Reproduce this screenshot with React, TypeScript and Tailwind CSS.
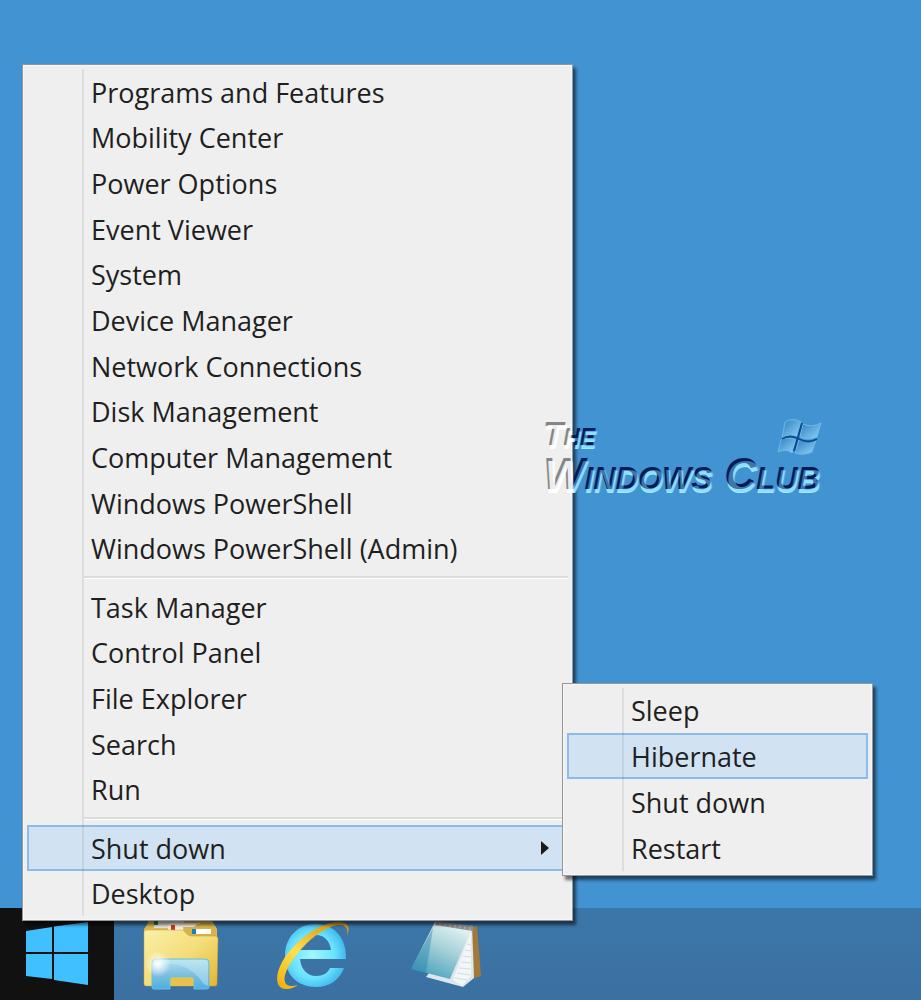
import { ReactNode } from "react";
import clsx from "clsx";

type MenuEntry = {
  label: string;
  active?: boolean;
  submenu?: MenuEntry[];
};

const powerEntries: MenuEntry[] = [
  { label: "Sleep" },
  { label: "Hibernate", active: true },
  { label: "Shut down" },
  { label: "Restart" },
];

const systemEntries: MenuEntry[] = [
  { label: "Programs and Features" },
  { label: "Mobility Center" },
  { label: "Power Options" },
  { label: "Event Viewer" },
  { label: "System" },
  { label: "Device Manager" },
  { label: "Network Connections" },
  { label: "Disk Management" },
  { label: "Computer Management" },
  { label: "Windows PowerShell" },
  { label: "Windows PowerShell (Admin)" },
];

const toolEntries: MenuEntry[] = [
  { label: "Task Manager" },
  { label: "Control Panel" },
  { label: "File Explorer" },
  { label: "Search" },
  { label: "Run" },
];

const sessionEntries: MenuEntry[] = [
  { label: "Shut down", active: true, submenu: powerEntries },
  { label: "Desktop" },
];

function MenuPanel({
  label,
  className,
  children,
}: {
  label: string;
  className: string;
  children: ReactNode;
}) {
  return (
    <div
      role="menu"
      aria-label={label}
      className={clsx(
        "absolute border border-[#979797] bg-[#efefef] p-1 shadow-[3px_4px_3px_rgba(0,0,0,0.55),inset_0_0_0_1px_#f6f6f6]",
        className
      )}
    >
      {children}
      {/* gutter line, runs through the highlighted rows as well */}
      <span className="pointer-events-none absolute inset-y-1 left-[59px] w-[2px] bg-black/7" />
    </div>
  );
}

function MenuGroup({
  entries,
  className,
}: {
  entries: MenuEntry[];
  className: string;
}) {
  return (
    <ul role="none" className={clsx("grid auto-rows-fr", className)}>
      {entries.map((entry) => (
        <li key={entry.label} role="none" className="relative flex">
          <button
            type="button"
            role="menuitem"
            aria-haspopup={entry.submenu ? "menu" : undefined}
            className={clsx(
              "flex w-full items-center justify-between border-2 pt-[2px] pr-4 pl-[62px] text-left leading-8",
              entry.active
                ? "border-[#8dbcec] bg-[#d1e2f2]"
                : "border-transparent"
            )}
          >
            {entry.label}
            {entry.submenu && (
              <svg width="10" height="16" viewBox="0 0 10 16" aria-hidden="true">
                <path d="M1 0v14l8-7z" fill="#1a1a1a" />
              </svg>
            )}
          </button>
          {entry.submenu && (
            <MenuPanel
              label={entry.label}
              className="-bottom-[5px] left-full z-10 -ml-[6px] w-[311px]"
            >
              <MenuGroup entries={entry.submenu} className="h-[183px]" />
            </MenuPanel>
          )}
        </li>
      ))}
    </ul>
  );
}

function MenuSeparator() {
  return (
    <div role="separator" className="flex h-[13px] items-center pl-[57px]">
      <span className="h-[3px] w-full border-b border-white bg-[#dcdcdc]" />
    </div>
  );
}

function ClubLogo() {
  return (
    <svg
      width="290"
      height="86"
      viewBox="0 0 290 86"
      className="pointer-events-none absolute top-[414px] left-[540px] z-20"
      role="img"
      aria-label="The Windows Club"
    >
      <defs>
        <linearGradient id="dark" gradientUnits="userSpaceOnUse" x1="0" x2="290" y1="0" y2="0">
          <stop offset="0.105" stopColor="#858585" />
          <stop offset="0.115" stopColor="#001a56" />
        </linearGradient>
        <linearGradient id="light" gradientUnits="userSpaceOnUse" x1="0" x2="290" y1="0" y2="0">
          <stop offset="0.105" stopColor="#ffffff" />
          <stop offset="0.115" stopColor="#a0ecff" />
        </linearGradient>
        <linearGradient id="face" gradientUnits="userSpaceOnUse" x1="0" x2="290" y1="0" y2="0">
          <stop offset="0.105" stopColor="#ffffff" stopOpacity="0.85" />
          <stop offset="0.115" stopColor="#7fd0fa" stopOpacity="0.5" />
        </linearGradient>
        <linearGradient id="pane" x1="0" x2="1" y1="0" y2="1">
          <stop offset="0" stopColor="#2f7fbf" />
          <stop offset="1" stopColor="#8fd4fb" />
        </linearGradient>
        <g
          id="wordmark"
          fontFamily='"Liberation Sans", Arial, sans-serif'
          fontWeight="700"
          fontStyle="italic"
          style={{ fontVariant: "small-caps" }}
        >
          <text x="3" y="31" fontSize="33">
            The
          </text>
          <text x="3" y="75" fontSize="44">
            Windows Club
          </text>
        </g>
      </defs>
      <use href="#wordmark" x="1" y="4" fill="url(#light)" />
      <use href="#wordmark" fill="url(#dark)" />
      <use href="#wordmark" x="2" y="3" fill="url(#face)" />
      <g stroke="#6db8ea" strokeWidth="1">
        <path d="M245 8q8-5 16 0l-4 15q-8-4-15 1z" fill="url(#pane)" />
        <path d="M263 10q8 4 18-1l-4 14q-9 4-17 0z" fill="url(#pane)" />
        <path d="M241 26q8-4 15 0l-4 13q-6-5-14-1z" fill="url(#pane)" />
        <path d="M259 26q8 4 17 0l-4 12q-9 4-17 1z" fill="url(#pane)" />
      </g>
      <path d="M262 9l-8 28M242 25q8-5 17 0t18 0" fill="none" stroke="#0d4b8c" strokeWidth="2" />
    </svg>
  );
}

function WindowsIcon() {
  return (
    <svg width="64" height="64" viewBox="0 0 64 64" aria-hidden="true">
      <g fill="#40c0ff">
        <path d="M1 9l26-4v25H1z" />
        <path d="M29 4.500L63 0v30H29z" />
        <path d="M1 32h26v25L1 54z" />
        <path d="M29 32h34v31l-34-5z" />
      </g>
    </svg>
  );
}

function FolderIcon() {
  return (
    <svg width="76" height="76" viewBox="0 0 76 76" aria-hidden="true">
      <defs>
        <linearGradient id="folder" x1="0" x2="1" y1="0" y2="1">
          <stop offset="0" stopColor="#faf0a8" />
          <stop offset="0.5" stopColor="#f4dd7b" />
          <stop offset="1" stopColor="#e3b52d" />
        </linearGradient>
        <linearGradient id="stand" x1="0" x2="0" y1="0" y2="1">
          <stop offset="0" stopColor="#b4e3f2" />
          <stop offset="0.5" stopColor="#7fc0dc" />
          <stop offset="1" stopColor="#4bb0e4" />
        </linearGradient>
        <radialGradient id="shine">
          <stop offset="0" stopColor="#ffffff" />
          <stop offset="1" stopColor="#ffffff" stopOpacity="0" />
        </radialGradient>
      </defs>
      <path d="M4 9l2-6h62l6 10v15H1V13z" fill="#dbb955" />
      <path d="M11 3h30v9H11z" fill="#e9e5da" />
      <path d="M11 5h4v4h-4z" fill="#22823b" />
      <path d="M25 7h32v10H25z" fill="#f4eee2" />
      <path d="M28 9h4v5h-4z" fill="#d6331c" />
      <path d="M40 11h11l3-3h14l5 6v9H41z" fill="#d9b24a" />
      <path
        d="M1 16q0-2 3-2h34q3 0 5 3 2 3 5 3h24q3 0 3 3l-1 45q0 2-2 2H3q-2 0-2-2z"
        fill="url(#folder)"
        stroke="#cf9f2b"
        strokeWidth="0.500"
      />
      <path d="M49 13h19v5H49z" fill="#fff" />
      <path d="M49 13h4v5h-4z" fill="#157fc3" />
      <path
        d="M12 43h50q4 0 4 4v24q0 2-2 2H51V63q0-2-2-2H29q-2 0-2 2v10H11q-2 0-2-2V47q0-4 3-4z"
        fill="url(#stand)"
        stroke="#6fbbdb"
      />
      <path d="M28 62h21v8H28z" fill="#e8c14a" />
      <path d="M10 50q32-9 51 18l4 2V48q0-4-4-4H13q-3 0-3 5z" fill="#c8edf7" opacity="0.45" />
      <circle cx="15" cy="48" r="13" fill="url(#shine)" />
    </svg>
  );
}

function ExplorerIcon() {
  return (
    <svg width="76" height="76" viewBox="0 0 76 76" aria-hidden="true">
      <defs>
        <radialGradient id="blueE" cx="0.45" cy="0.5" r="0.6">
          <stop offset="0" stopColor="#a4f7ff" />
          <stop offset="0.6" stopColor="#6be2fd" />
          <stop offset="1" stopColor="#35aeea" />
        </radialGradient>
        <linearGradient id="ring" x1="0.7" x2="0" y1="0" y2="1">
          <stop offset="0" stopColor="#d99c13" />
          <stop offset="0.5" stopColor="#ffe14c" />
          <stop offset="1" stopColor="#f0ad0a" />
        </linearGradient>
      </defs>
      <path
        d="M70 43H24c1 10 7 17 16 17 7 0 12-3 14-8h14c-4 12-15 19-28 19C22 71 9 59 9 40S22 8 40 8c18 0 31 14 30 35zM24 34h31c-1-9-7-15-15-15-9 0-15 6-16 15z"
        fill="url(#blueE)"
        fillRule="evenodd"
      />
      <path
        d="M71 20c4-10 0-14-9-14C43 6 18 26 6 46-2 61 0 74 11 73c4 0 8-2 11-4-7 2-12 1-13-3-3-8 8-25 21-38C43 15 57 8 65 9c6 1 7 4 6 11z"
        fill="url(#ring)"
      />
    </svg>
  );
}

function NotepadIcon() {
  return (
    <svg width="74" height="76" viewBox="0 0 74 76" aria-hidden="true">
      <defs>
        <linearGradient id="cover" x1="0.7" x2="0.2" y1="0" y2="1">
          <stop offset="0" stopColor="#e6f3f3" />
          <stop offset="0.45" stopColor="#a4d0d8" />
          <stop offset="1" stopColor="#3e9dba" />
        </linearGradient>
      </defs>
      <path d="M62 11l5-1 4 50-12 4z" fill="#a3793a" />
      <path d="M62 9l2 53-11 9-37-10 6-8z" fill="#dde7eb" />
      <path d="M61 15v45l-9 10-9-6z" fill="#f2f6f8" />
      <path
        d="M57 28l4 1m-6 5l6 1m-8 5l8 1m-10 5l10 1m-12 5l12 1m-14 4l13 2m-15 3l12 2"
        stroke="#d3dde2"
      />
      <path d="M25 6l36 8-21 49L1 53z" fill="url(#cover)" />
      <path d="M23 12l-7 45-15-4z" fill="#1e7eab" opacity="0.4" />
      <path d="M26 5l38 5-1 5-38-6z" fill="#8b8d91" />
      <path d="M30 7v3m5-2v3m5-3v3m5-2v3m5-3v3m5-2v3m5-2v3" stroke="#b5b5b5" />
    </svg>
  );
}

const pinnedApps = [
  { name: "File Explorer", icon: <FolderIcon /> },
  { name: "Internet Explorer", icon: <ExplorerIcon /> },
  { name: "Notepad", icon: <NotepadIcon /> },
];

export default function App() {
  return (
    <div className="relative flex min-h-screen flex-col overflow-hidden bg-[#4293d1] font-['Open_Sans','Noto_Sans',sans-serif] text-[27px] text-[#1f1f1f]">
      <main className="flex-1">
        <ClubLogo />
      </main>

      <MenuPanel label="Quick links" className="bottom-[79px] left-[22px] w-[551px]">
        <MenuGroup entries={systemEntries} className="h-[502px]" />
        <MenuSeparator />
        <MenuGroup entries={toolEntries} className="h-[228px]" />
        <MenuSeparator />
        <MenuGroup entries={sessionEntries} className="h-[91px]" />
      </MenuPanel>

      <footer className="flex h-[92px] bg-linear-to-b from-[#3c77a9] to-[#3b70a1]">
        <button
          type="button"
          aria-label="Start"
          className="flex w-[114px] items-center justify-center bg-[#111111]"
        >
          <WindowsIcon />
        </button>
        {pinnedApps.map((app) => (
          <button
            key={app.name}
            type="button"
            aria-label={app.name}
            className="flex w-[133px] items-center justify-center"
          >
            {app.icon}
          </button>
        ))}
      </footer>
    </div>
  );
}
